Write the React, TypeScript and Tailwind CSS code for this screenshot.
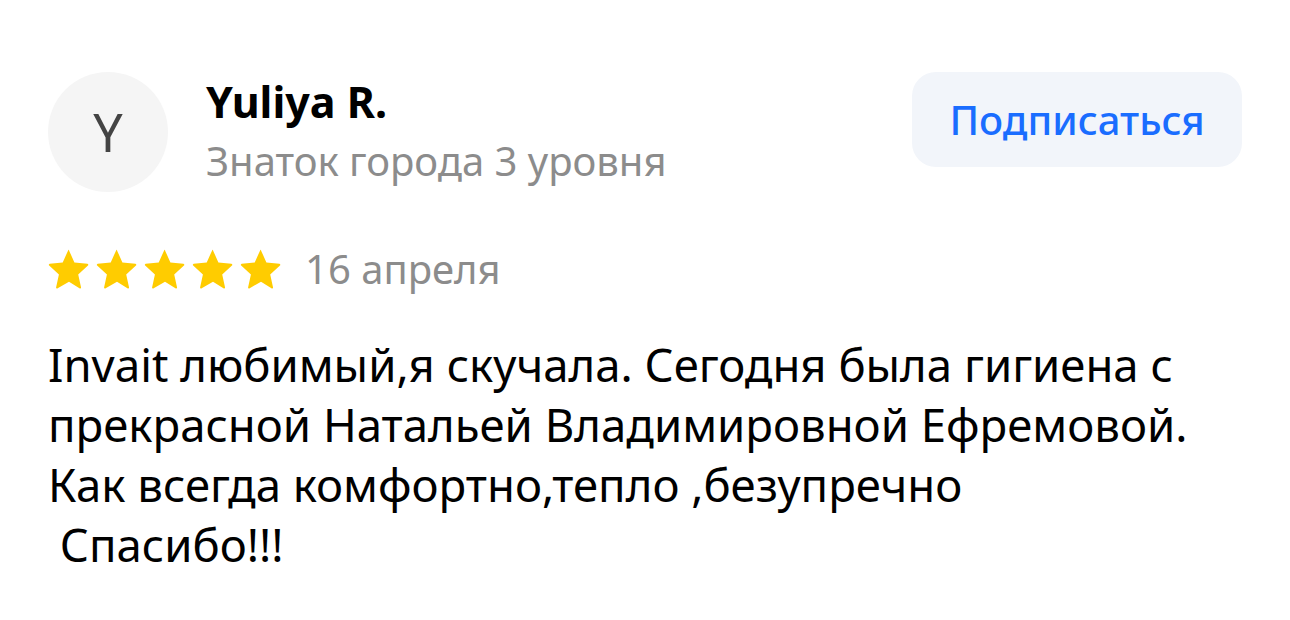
const stars = [0, 1, 2, 3, 4];

function StarIcon() {
  return (
    <svg width="42" height="40" viewBox="0 0 24 23" className="shrink-0">
      <path
        d="M12 0.8l3.1 6.9 7.5 0.8c0.5 0.1 0.7 0.7 0.3 1l-5.6 5.1 1.6 7.4c0.1 0.5-0.4 0.9-0.9 0.6L12 18.8l-6.5 3.8c-0.5 0.3-1-0.1-0.9-0.6l1.6-7.4-5.6-5.1c-0.4-0.3-0.2-0.9 0.3-1l7.5-0.8L11.5 0.8c0.2-0.4 0.8-0.4 0.5 0z"
        fill="#FFCC00"
      />
    </svg>
  );
}

export default function App() {
  return (
    <div className="min-h-[620px] w-[1290px] bg-white px-12 pt-[72px] font-['Noto_Sans',sans-serif]">
      <div className="flex items-start justify-between">
        <div className="flex items-start gap-[38px]">
          <div className="flex h-[120px] w-[120px] items-center justify-center rounded-full bg-[#f5f5f5] text-[52px] text-[#444444]">
            Y
          </div>
          <div className="flex flex-col pt-[4px]">
            <span className="text-[43px] font-bold leading-[52px] text-black">Yuliya R.</span>
            <span className="mt-[3px] text-[40px] leading-[60px] text-[#8c8c8c]">Знаток города 3 уровня</span>
          </div>
        </div>
        <button className="flex h-[95px] w-[330px] items-center justify-center rounded-[24px] bg-[#f2f5fa] text-[40px] font-medium text-[#1a6dff]">
          Подписаться
        </button>
      </div>
      <div className="mt-[53px] flex items-center gap-[23px]">
        <div className="flex gap-[6px]">
          {stars.map((i) => (
            <StarIcon key={i} />
          ))}
        </div>
        <span className="text-[40px] leading-[48px] text-[#8c8c8c]">16 апреля</span>
      </div>
      <p className="mt-[41px] whitespace-pre-wrap text-[45.5px] leading-[60px] text-black">
        {'Invait любимый,я скучала. Сегодня была гигиена с прекрасной Натальей Владимировной Ефремовой.\nКак всегда комфортно,тепло ,безупречно\n Спасибо!!!'}
      </p>
    </div>
  );
}
